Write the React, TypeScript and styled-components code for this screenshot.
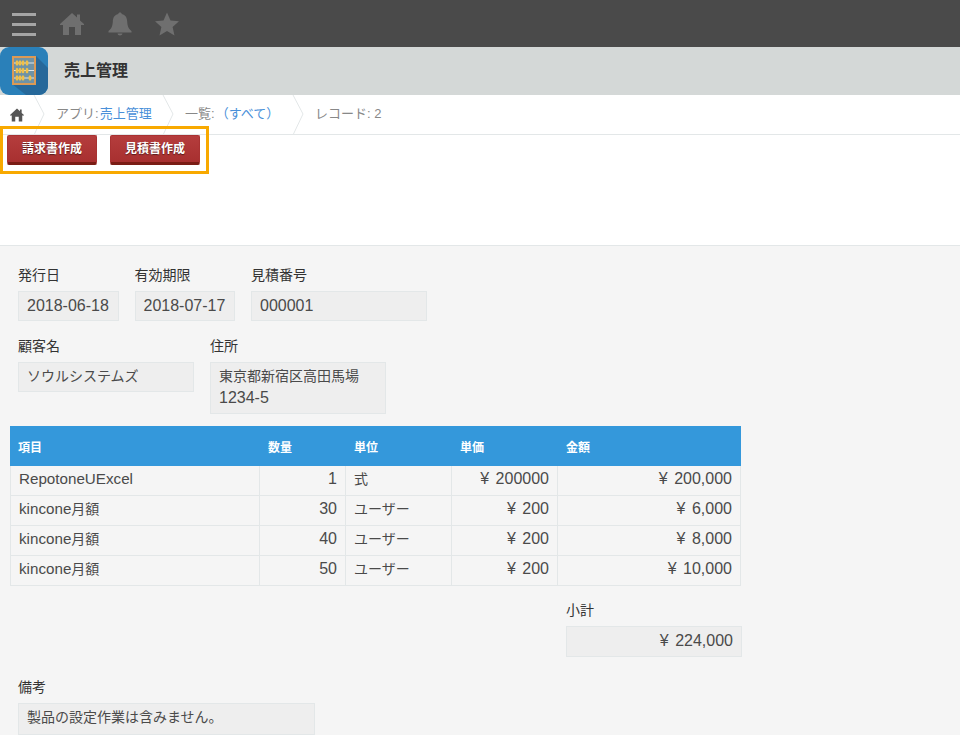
import styled, { createGlobalStyle } from 'styled-components';

const GlobalStyle = createGlobalStyle`
  html, body {
    margin: 0;
    padding: 0;
    background: #f5f5f5;
    color: #333;
    font-family: "Liberation Sans", "Noto Sans CJK JP", sans-serif;
    font-size: 14px;
    overflow: hidden;
  }
  * { box-sizing: border-box; }
`;

const HomeIcon = ({ size = 24, color = '#6f6f6f' }: { size?: number; color?: string }) => (
  <svg width={size} height={size} viewBox="0 0 24 24">
    <path
      fill={color}
      d="M12 1 17 5.600V2.500h3v5.900L24 12v1h-3v10h-6v-8H9v8H3V13H0v-1z"
    />
  </svg>
);

const BellIcon = () => (
  <svg width="24" height="24" viewBox="0 0 24 24">
    <path
      fill="#6f6f6f"
      d="M12 0.500c1 0 1.700.7 1.800 1.600 3.600.8 5.200 3.600 5.400 7.400.2 4 .9 7 4.300 9.500v1.400H.5V19c3.400-2.500 4.100-5.500 4.300-9.500.2-3.800 1.800-6.600 5.400-7.400.1-.9.8-1.600 1.800-1.600zM9.500 21.500h5c-.2 1.300-1.200 2-2.500 2s-2.300-.7-2.500-2z"
    />
  </svg>
);

const StarIcon = () => (
  <svg width="24" height="24" viewBox="0 0 24 24">
    <path fill="#6f6f6f" d="M12 .5l3.500 8 8.500.8-6.400 5.700 1.900 8.500L12 19l-7.500 4.500 1.900-8.500L0 9.300l8.500-.8z" />
  </svg>
);

const AbacusIcon = () => (
  <svg width="48" height="48" viewBox="0 0 48 48">
    <defs>
      <clipPath id="tile">
        <rect width="48" height="48" rx="9" />
      </clipPath>
    </defs>
    <g clipPath="url(#tile)">
      <rect width="48" height="48" fill="#2a80b9" />
      <path d="M36 9 48 21v27H26L12 37z" fill="#26689a" />
      <rect x="13" y="10" width="22" height="27" fill="#6f93a6" stroke="#dc9a55" strokeWidth="2" />
      {[16, 23.500, 31].map((y) => (
        <g key={y}>
          <rect x="14" y={y - 0.5} width="20" height="1" fill="#dfe6e8" />
          {[17, 20, 23].map((x) => (
            <ellipse key={x} cx={x} cy={y} rx="1.500" ry="2.700" fill="#f0c048" />
          ))}
          <ellipse cx={y === 31 ? 30 : 27} cy={y} rx="1.500" ry="2.700" fill="#f0c048" />
        </g>
      ))}
    </g>
  </svg>
);

const Chevron = () => (
  <ChevronBox width="12" height="40" viewBox="0 0 12 40">
    <path d="M1 0 11 19 1 40" fill="none" stroke="#e3e7e8" strokeWidth="1" />
  </ChevronBox>
);

const rows = [
  { item: 'RepotoneUExcel', suffix: '', qty: '1', unit: '式', price: '¥ 200000', amount: '¥ 200,000' },
  { item: 'kincone', suffix: '月額', qty: '30', unit: 'ユーザー', price: '¥ 200', amount: '¥ 6,000' },
  { item: 'kincone', suffix: '月額', qty: '40', unit: 'ユーザー', price: '¥ 200', amount: '¥ 8,000' },
  { item: 'kincone', suffix: '月額', qty: '50', unit: 'ユーザー', price: '¥ 200', amount: '¥ 10,000' },
];

const Field = ({
  label,
  width,
  height = 30,
  right,
  children,
}: {
  label: string;
  width: number;
  height?: number;
  right?: boolean;
  children: React.ReactNode;
}) => (
  <FieldWrap $width={width}>
    <FieldLabel>{label}</FieldLabel>
    <FieldValue $height={height} $right={right}>
      {children}
    </FieldValue>
  </FieldWrap>
);

export default function App() {
  return (
    <Page>
      <GlobalStyle />
      <TopBar>
        <Hamburger>
          <span />
          <span />
          <span />
        </Hamburger>
        <HomeIcon />
        <BellIcon />
        <StarIcon />
      </TopBar>
      <AppBar>
        <AbacusIcon />
        <AppTitle>売上管理</AppTitle>
      </AppBar>
      <Breadcrumb>
        <CrumbHome>
          <HomeIcon size={14} color="#555" />
        </CrumbHome>
        <Chevron />
        <Crumb $width={117}>
          アプリ:<CrumbLink>売上管理</CrumbLink>
        </Crumb>
        <Chevron />
        <Crumb $width={118}>
          一覧:<CrumbLink>（すべて）</CrumbLink>
        </Crumb>
        <Chevron />
        <Crumb $width={100}>レコード: 2</Crumb>
      </Breadcrumb>
      <Toolbar>
        <ActionButton>請求書作成</ActionButton>
        <ActionButton>見積書作成</ActionButton>
        <Highlight />
      </Toolbar>
      <Form>
        <FieldRow $height={71}>
          <Field label="発行日" width={100.5}><Digits>2018-06-18</Digits></Field>
          <Field label="有効期限" width={100.5}><Digits>2018-07-17</Digits></Field>
          <Field label="見積番号" width={176}><Digits>000001</Digits></Field>
        </FieldRow>
        <FieldRow $height={88}>
          <Field label="顧客名" width={176}>ソウルシステムズ</Field>
          <Field label="住所" width={176} height={52}>
            東京都新宿区高田馬場
            <br />
            <Digits>1234-5</Digits>
          </Field>
        </FieldRow>
        <Table>
          <colgroup>
            <col style={{ width: 250 }} />
            <col style={{ width: 86 }} />
            <col style={{ width: 106 }} />
            <col style={{ width: 106 }} />
            <col style={{ width: 183 }} />
          </colgroup>
          <thead>
            <tr>
              <HeadCell>項目</HeadCell>
              <HeadCell>数量</HeadCell>
              <HeadCell>単位</HeadCell>
              <HeadCell>単価</HeadCell>
              <HeadCell>金額</HeadCell>
            </tr>
          </thead>
          <tbody>
            {rows.map((row, idx) => (
              <tr key={idx}>
                <BodyCell>
                  <Word>{row.item}</Word>
                  {row.suffix}
                </BodyCell>
                <BodyCell $right><Digits>{row.qty}</Digits></BodyCell>
                <BodyCell>{row.unit}</BodyCell>
                <BodyCell $right><Digits>{row.price}</Digits></BodyCell>
                <BodyCell $right><Digits>{row.amount}</Digits></BodyCell>
              </tr>
            ))}
          </tbody>
        </Table>
        <TotalRow>
          <Field label="小計" width={176} height={31} right><Digits>¥ 224,000</Digits></Field>
        </TotalRow>
        <FieldRow $height={70}>
          <Field label="備考" width={297} height={32}>製品の設定作業は含みません。</Field>
        </FieldRow>
      </Form>
    </Page>
  );
}

const Page = styled.div`
  width: 960px;
  height: 735px;
  overflow: hidden;
`;

const TopBar = styled.div`
  height: 47px;
  background: #4a4a4a;
  display: flex;
  align-items: center;
  gap: 23.5px;
  padding: 1px 0 0 12px;
`;

const Hamburger = styled.div`
  width: 24px;
  height: 23px;
  margin-right: 0.5px;
  display: flex;
  flex-direction: column;
  justify-content: space-between;

  span {
    display: block;
    height: 3px;
    background: #a5a5a5;
  }
`;

const AppBar = styled.div`
  height: 48px;
  background: #d4d8d7;
  display: flex;
  align-items: center;
`;

const AppTitle = styled.div`
  margin: 0 0 4px 16px;
  font-size: 16px;
  font-weight: 700;
  color: #333;
`;

const Breadcrumb = styled.div`
  height: 40px;
  background: #fff;
  border-bottom: 1px solid #e3e7e8;
  display: flex;
  align-items: flex-start;
  color: #888;
  font-size: 13px;
`;

const CrumbHome = styled.div`
  width: 33px;
  height: 39px;
  padding-left: 10px;
  display: flex;
  align-items: center;
`;

const ChevronBox = styled.svg`
  flex: none;
`;

const Crumb = styled.div<{ $width: number }>`
  width: ${(p) => p.$width}px;
  height: 39px;
  padding-left: 11px;
  line-height: 37px;
  white-space: nowrap;
`;

const CrumbLink = styled.span`
  margin-left: 1px;
  color: #4a90d9;
`;

const Toolbar = styled.div`
  position: relative;
  height: 111px;
  background: #fff;
  border-bottom: 1px solid #e3e7e8;
  display: flex;
  align-items: flex-start;
  gap: 13px;
  padding-left: 7px;
`;

const ActionButton = styled.button`
  width: 90px;
  height: 30px;
  padding: 0 0 3px;
  border: 1px solid #a93232;
  border-bottom: 3px solid #7a1c15;
  border-radius: 2px;
  background: linear-gradient(#b53d3d, #a83030);
  color: #fff;
  font-family: inherit;
  font-size: 12px;
  font-weight: 700;
  text-shadow: 0 1px 1px rgba(0, 0, 0, 0.5);
`;

const Highlight = styled.div`
  position: absolute;
  left: 0;
  top: -9px;
  width: 209px;
  height: 48px;
  border: 3px solid #f8a900;
  pointer-events: none;
`;

const Form = styled.div`
  padding: 21px 0 0 10px;
`;

const FieldRow = styled.div<{ $height: number }>`
  height: ${(p) => p.$height}px;
  padding-left: 8px;
  display: flex;
  align-items: flex-start;
  gap: 16px;
`;

const FieldWrap = styled.div<{ $width: number }>`
  width: ${(p) => p.$width}px;
`;

const FieldLabel = styled.div`
  height: 24px;
  font-size: 14px;
  line-height: 17px;
  color: #333;
  white-space: nowrap;
`;

const FieldValue = styled.div<{ $height: number; $right?: boolean }>`
  height: ${(p) => p.$height}px;
  padding: 3px 8px;
  background: #eee;
  border: 1px solid #e3e7e8;
  font-size: 14px;
  line-height: 21px;
  color: #4a4a4a;
  white-space: nowrap;
  text-align: ${(p) => (p.$right ? 'right' : 'left')};
`;

// latin text runs larger than the kana/kanji around it
const Word = styled.span`
  font-size: 15.2px;
`;

const Digits = styled.span`
  font-size: 16px;
  word-spacing: 2px;
`;

const Table = styled.table`
  width: 731px;
  table-layout: fixed;
  border-collapse: separate;
  border-spacing: 0;
`;

const HeadCell = styled.th`
  height: 40px;
  padding: 0 8px;
  background: #3498db;
  color: #fff;
  font-size: 12px;
  font-weight: 700;
  text-align: left;
`;

const BodyCell = styled.td<{ $right?: boolean }>`
  height: 30px;
  padding: 0 8px 3px;
  border-right: 1px solid #e3e7e8;
  border-bottom: 1px solid #e3e7e8;
  font-size: 14px;
  line-height: 20px;
  color: #4a4a4a;
  white-space: nowrap;
  text-align: ${(p) => (p.$right ? 'right' : 'left')};

  &:first-child {
    border-left: 1px solid #e3e7e8;
  }
`;

const TotalRow = styled.div`
  height: 77px;
  margin-top: 16px;
  padding-left: 556px;
`;
